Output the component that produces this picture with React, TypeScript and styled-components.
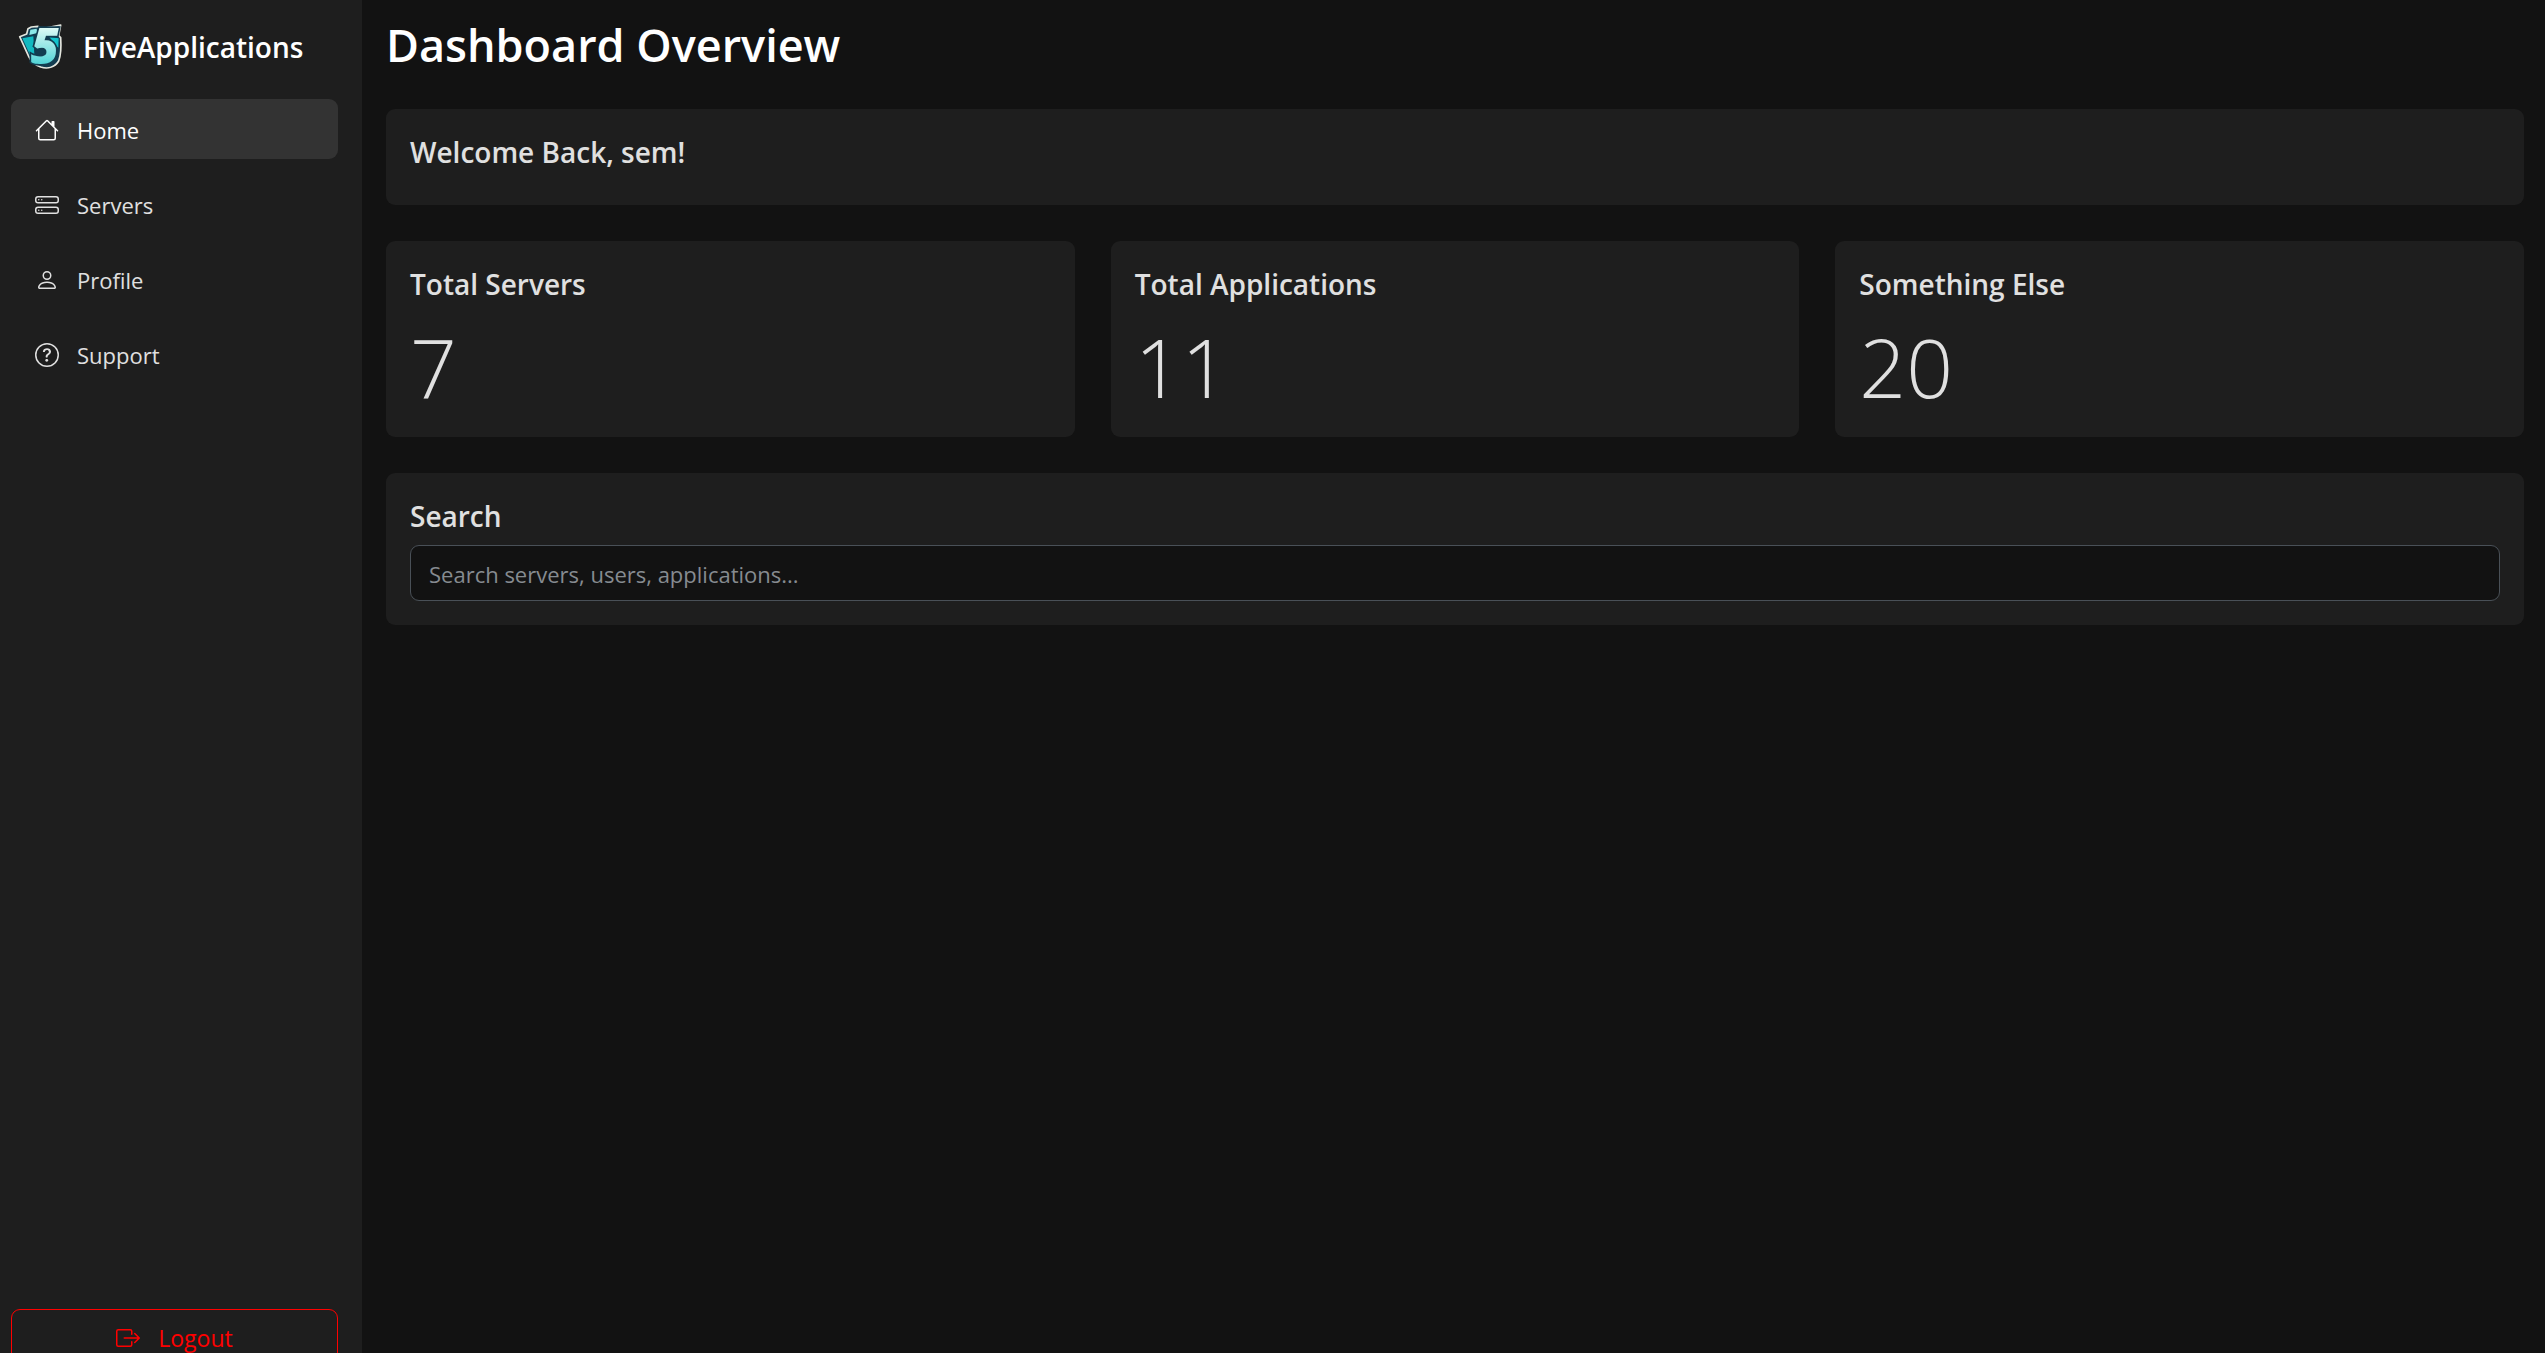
import React from "react";
import styled, { createGlobalStyle } from "styled-components";
import {
  BsHouse,
  BsHddStack,
  BsPerson,
  BsQuestionCircle,
  BsBoxArrowRight,
} from "react-icons/bs";

const GlobalStyle = createGlobalStyle`
  *, *::before, *::after { box-sizing: border-box; }
  body {
    margin: 0;
    background: #121212;
    color: #e0e0e0;
    font-family: "Open Sans", "Noto Sans", sans-serif;
    font-size: 22px;
    line-height: 36px;
    overflow: hidden;
  }
`;

const Shell = styled.div`
  display: flex;
  height: 100vh;
  overflow: hidden;
`;

const Sidebar = styled.aside`
  display: flex;
  flex-direction: column;
  flex: none;
  width: 362px;
  height: calc(100vh + 24px);
  padding: 12px 24px 10px 11px;
  background: #1e1e1e;
`;

const Brand = styled.a`
  display: flex;
  align-items: center;
  gap: 21px;
  height: 69px;
  margin-bottom: 18px;
  padding-left: 7px;
  color: #fff;
  font-size: 28px;
  font-weight: 600;
  text-decoration: none;
`;

const Nav = styled.nav`
  display: flex;
  flex-direction: column;
  gap: 15px;
`;

const NavLink = styled.a<{ $active?: boolean }>`
  display: flex;
  align-items: center;
  gap: 18px;
  height: 60px;
  padding: 2px 24px 0;
  border-radius: 9px;
  background: ${(p) => (p.$active ? "#333" : "transparent")};
  color: ${(p) => (p.$active ? "#fff" : "#e0e0e0")};
  text-decoration: none;
  svg { width: 24px; height: 24px; }
`;

const LogoutButton = styled.button`
  display: flex;
  align-items: center;
  justify-content: center;
  gap: 18px;
  height: 58px;
  margin-top: auto;
  border: 1px solid #f00;
  border-radius: 9px;
  background: transparent;
  color: #f00;
  font: inherit;
  font-size: 23px;
  svg { width: 24px; height: 24px; }
`;

const Main = styled.main`
  display: flex;
  flex-direction: column;
  flex: 1;
  gap: 36px;
  min-width: 0;
  padding: 16px 21px 24px 24px;
`;

const Title = styled.h1`
  margin: 0;
  font-size: 45px;
  font-weight: 600;
  line-height: 57px;
  color: #fff;
`;

const Stats = styled.div`
  display: grid;
  grid-template-columns: repeat(3, 1fr);
  gap: 36px;
`;

const Card = styled.section`
  padding: 24px;
  border-radius: 9px;
  background: #1e1e1e;
`;

const CardTitle = styled.h2`
  display: block;
  margin: 0;
  padding-bottom: 10px;
  font-size: 28px;
  font-weight: 600;
  line-height: 38px;
`;

const Figure = styled.p`
  margin: 0;
  padding-top: 6px;
  font-size: 82px;
  font-weight: 300;
  line-height: 94px;
`;

const SearchInput = styled.input`
  display: block;
  width: 100%;
  height: 56px;
  padding: 1px 18px 0;
  border: 1px solid #495057;
  border-radius: 9px;
  background: #121212;
  color: #e0e0e0;
  font: inherit;
  &::placeholder { color: #868b90; opacity: 1; }
`;

const LogoMark = styled.svg`
  flex: none;
  width: 44px;
  height: 48px;
  overflow: visible;
`;

const Logo = () => (
  <LogoMark viewBox="24 22 132 144" aria-hidden="true">
    <defs>
      <linearGradient id="digit" x1="0" y1="0" x2="0" y2="1">
        <stop offset="0.2" stopColor="#e9fdf8" />
        <stop offset="0.8" stopColor="#4fd3d6" />
      </linearGradient>
    </defs>
    <path
      d="M29 63 50 55 54 39 64 34 84 32 90 40 152 28 146 60 152 66C154 96 153 118 146 136 134 156 112 160 92 154 72 146 62 136 56 122Z"
      fill="#123c50"
      stroke="#e4e6de"
      strokeWidth="5"
      strokeLinejoin="round"
    />
    <path d="M37 68 70 62 74 134 60 118Z" fill="#12b9c0" />
    <path d="M58 58 61 42 80 39 82 52Z" fill="#8ce8e8" />
    <path d="M118 64 146 68 145 96 134 84Z" fill="#12c4cc" />
    <text
      x="62"
      y="144"
      fontFamily="Open Sans, sans-serif"
      fontSize="146"
      fontWeight="800"
      fontStyle="italic"
      fill="url(#digit)"
      stroke="#123c50"
      strokeWidth="10"
      paintOrder="stroke"
    >
      5
    </text>
  </LogoMark>
);

const links = [
  { label: "Home", Icon: BsHouse },
  { label: "Servers", Icon: BsHddStack },
  { label: "Profile", Icon: BsPerson },
  { label: "Support", Icon: BsQuestionCircle },
];

const stats = [
  { label: "Total Servers", value: 7 },
  { label: "Total Applications", value: 11 },
  { label: "Something Else", value: 20 },
];

export default function App() {
  return (
    <>
      <GlobalStyle />
      <Shell>
        <Sidebar>
          <Brand href="#">
            <Logo />
            FiveApplications
          </Brand>
          <Nav>
            {links.map(({ label, Icon }, i) => (
              <NavLink key={label} href="#" $active={i === 0}>
                <Icon />
                {label}
              </NavLink>
            ))}
          </Nav>
          <LogoutButton type="button">
            <BsBoxArrowRight />
            Logout
          </LogoutButton>
        </Sidebar>
        <Main>
          <Title>Dashboard Overview</Title>
          <Card>
            <CardTitle>Welcome Back, sem!</CardTitle>
          </Card>
          <Stats>
            {stats.map((s) => (
              <Card key={s.label}>
                <CardTitle>{s.label}</CardTitle>
                <Figure>{s.value}</Figure>
              </Card>
            ))}
          </Stats>
          <Card>
            <CardTitle as="label" htmlFor="search">
              Search
            </CardTitle>
            <SearchInput
              id="search"
              type="search"
              placeholder="Search servers, users, applications..."
            />
          </Card>
        </Main>
      </Shell>
    </>
  );
}
